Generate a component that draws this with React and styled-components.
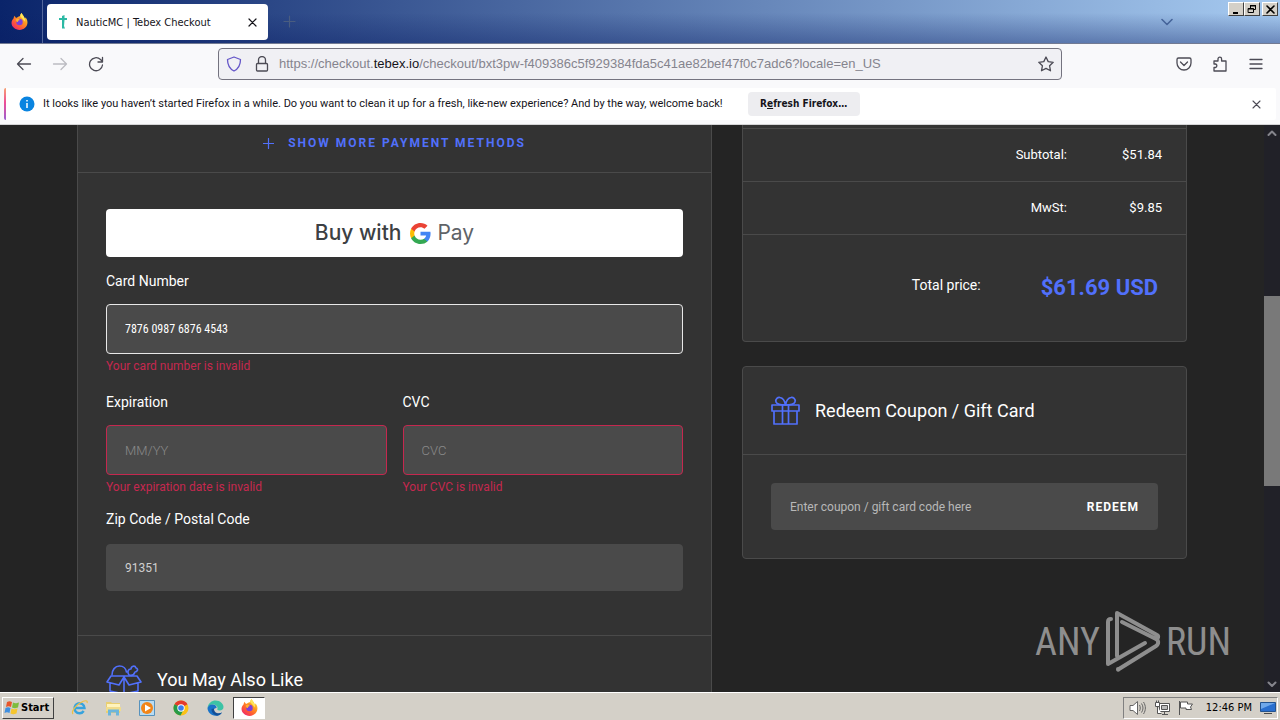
import React from "react";
import styled, { createGlobalStyle, css } from "styled-components";

const ui = `"DejaVu Sans Condensed", "Noto Sans", sans-serif`;
const web = `Roboto, "Liberation Sans", sans-serif`;
const line = "#4a4a4a";
const panel = "#333333";
const field = "#4a4a4a";
const accent = "#5170fb";
const danger = "#c5284f";

const GlobalStyle = createGlobalStyle`
  *, *::before, *::after { box-sizing: border-box; }
  body { margin: 0; background: #242424; font-family: ${web}; }
  button, input { font: inherit; color: inherit; margin: 0; padding: 0; border: 0; background: none; }
  button { cursor: pointer; }
  input { outline: none; min-width: 0; }
  svg { display: block; flex: none; }
`;

const Screen = styled.div`
  display: flex;
  flex-direction: column;
  height: 100vh;
  overflow: hidden;
`;

/* ---------- browser window ---------- */

const TitleBar = styled.header`
  display: flex;
  align-items: stretch;
  height: 44px;
  flex: none;
  background:
    linear-gradient(to bottom, rgba(0, 20, 80, 0) 30%, rgba(10, 30, 100, 0.38) 100%),
    linear-gradient(to right, #0a246a, #a6caf0);
  border-bottom: 1px solid #727a92;
`;

const ViewButton = styled.button`
  display: grid;
  place-items: center;
  width: 43px;
  padding-right: 3px;
  border-right: 1px solid #53679c;
`;

const Tab = styled.div`
  display: flex;
  align-items: center;
  gap: 7px;
  width: 221px;
  height: 36px;
  margin: 4px 0 0 4px;
  padding: 0 10px;
  border-radius: 4px;
  background: #fff;
  color: #15141a;
  font: 11px/16px ${ui};
`;

const TabTitle = styled.span`
  flex: 1;
  padding-top: 2px;
  white-space: nowrap;
`;

const IconButton = styled.button`
  display: grid;
  place-items: center;
  width: ${(p) => p.$w || 36}px;
  color: ${(p) => p.$color || "#4c4b55"};
`;

const Spacer = styled.div`
  flex: 1;
`;

const WindowButtons = styled.div`
  display: flex;
  align-items: flex-start;
  margin-left: 43px;
  padding: 2px 2px 0 0;
`;

const WindowButton = styled.button`
  display: grid;
  place-items: center;
  width: 16px;
  height: 14px;
  background: #d4d0c8;
  border: 1px solid;
  border-color: #fff #404040 #404040 #fff;
  margin-left: ${(p) => (p.$apart ? 2 : 0)}px;
`;

const Toolbar = styled.nav`
  display: flex;
  align-items: center;
  height: 44px;
  flex: none;
  padding: 0 6px 4px;
  background: #f9f9fb;
`;

const ToolGroup = styled.div`
  display: flex;
  width: 212px;
  justify-content: ${(p) => (p.$end ? "flex-end" : "flex-start")};
`;

const AddressBar = styled.div`
  display: flex;
  align-items: center;
  flex: 1;
  min-width: 0;
  height: 32px;
  padding: 0 7px;
  gap: 9px;
  border: 1px solid #74737f;
  border-radius: 4px;
  background: #f0f0f4;
`;

const SiteButtons = styled.div`
  display: flex;
  gap: 12px;
`;

const Address = styled.div`
  flex: 1;
  min-width: 0;
  overflow: hidden;
  white-space: nowrap;
  outline: none;
  font: 13px/20px "Liberation Sans", sans-serif;
  color: #85848e;
  b { font-weight: 400; color: #15141a; }
`;

const NoticeWrap = styled.div`
  flex: none;
  padding: 0 4px 4px;
  background: #f9f9fb;
  border-bottom: 1px solid #d4d4d6;
`;

const Notice = styled.div`
  display: flex;
  align-items: center;
  height: 32px;
  padding-left: 14px;
  background: linear-gradient(#f7a273, #ee4d96 45%, #9a5fd0) left / 2px 100% no-repeat, #fff;
  border-radius: 2px;
  color: #15141a;
  font: 11px/16px ${web};
`;

const NoticeText = styled.span`
  margin-left: 7px;
  white-space: nowrap;
`;

const NoticeButton = styled.button`
  width: 112px;
  height: 24px;
  margin-left: 25px;
  border-radius: 4px;
  background: #ededf0;
  font: bold 10px/16px ${ui};
`;

/* ---------- page ---------- */

const Viewport = styled.div`
  position: relative;
  display: flex;
  flex: 1;
  min-height: 0;
  overflow: hidden;
  background: #242424;
`;

const Page = styled.main`
  flex: 1;
  min-width: 0;
  display: flex;
  justify-content: center;
  align-items: flex-start;
  color: #fff;
`;

const Columns = styled.div`
  display: grid;
  grid-template-columns: minmax(0, 127fr) minmax(0, 89fr);
  gap: 30px;
  width: 100%;
  max-width: 1110px;
`;

const Payment = styled.section`
  background: ${panel};
  border: solid ${line};
  border-width: 0 1px;
`;

const ShowMore = styled.button`
  display: flex;
  justify-content: center;
  align-items: center;
  gap: 14px;
  width: 100%;
  padding: 9px 0 20px;
  border-bottom: 1px solid ${line};
  color: ${accent};
  font: 700 12px/18px ${web};
  letter-spacing: 2px;
`;

const CardForm = styled.form`
  display: flex;
  flex-direction: column;
  padding: 36px 28px 44px;
  border-bottom: 1px solid ${line};
`;

const GPayButton = styled.button`
  display: flex;
  justify-content: center;
  align-items: center;
  gap: 9px;
  height: 48px;
  border-radius: 4px;
  background: #fff;
  color: #3c4043;
  font: 500 21px/24px Inter, sans-serif;
`;

const GPayMark = styled.span`
  display: flex;
  align-items: center;
  gap: 6px;
  color: #5f6368;
  font: 400 21px/24px Inter, sans-serif;
`;

const FieldRow = styled.div`
  display: grid;
  grid-template-columns: 1fr 1fr;
  gap: 16px;
`;

const Field = styled.div`
  display: flex;
  flex-direction: column;
  gap: 13px;
  margin-top: ${(p) => (p.$loose ? 18 : 14)}px;
`;

const Label = styled.label`
  font: 14px/20px ${web};
`;

const TextInput = styled.input`
  height: 50px;
  padding: 0 18px;
  border: 1px solid ${(p) => (p.$invalid ? danger : p.$focused ? "#e8e8e8" : field)};
  border-radius: 4px;
  background: ${field};
  color: #fff;
  font: 13px/18px ${web};
  &::placeholder { color: #8a8a8a; opacity: 1; font-weight: 300; }
  ${(p) => p.$narrow && css`font: 12px/18px "Roboto Condensed", ${web};`}
  ${(p) => p.$short && css`height: 47px; margin-top: 2px; color: #d0d0d0; font-size: 12px;`}
`;

const ErrorText = styled.div`
  margin-top: -9px;
  color: ${danger};
  font: 12px/16px ${web};
`;

const SectionTitle = styled.h2`
  display: flex;
  align-items: center;
  gap: 15px;
  margin: 0;
  padding: 28px;
  font: 400 18px/31px ${web};
`;

const Side = styled.aside`
  display: flex;
  flex-direction: column;
  gap: 24px;
`;

const Card = styled.section`
  background: ${panel};
  border: 1px solid ${line};
  border-radius: 4px;
  ${(p) => p.$cut && css`border-top: 0; border-radius: 0 0 4px 4px; padding-top: 3px;`}
`;

const Totals = styled.dl`
  margin: 0;
`;

const TotalsRow = styled.div`
  display: flex;
  justify-content: flex-end;
  align-items: center;
  height: 53px;
  padding-right: 24px;
  border-top: 1px solid ${line};
  font: 13px/18px ${web};
  dt, dd { margin: 0; }
  dd { width: 95px; text-align: right; }
`;

const GrandTotal = styled(TotalsRow)`
  height: 107px;
  padding-right: 28px;
  font-size: 14px;
  dt { padding-bottom: 6px; }
  dd { width: auto; margin-left: 60px; color: ${accent}; font-weight: 700; font-size: 22px; line-height: 24px; }
`;

const CouponBody = styled.form`
  padding: 28px;
  border-top: 1px solid ${line};
`;

const CouponBox = styled.div`
  display: flex;
  align-items: center;
  height: 47px;
  padding: 0 19px;
  border-radius: 4px;
  background: ${field};
`;

const CouponInput = styled.input`
  flex: 1;
  font: 12px/18px ${web};
  color: #fff;
  &::placeholder { color: #b8b8b8; opacity: 1; }
`;

const RedeemButton = styled.button`
  font: 700 12px/18px ${web};
  letter-spacing: 1px;
`;

const ScrollTrack = styled.div`
  display: grid;
  grid-template-rows: 16px 155fr 189fr 190fr 16px;
  width: 16px;
  flex: none;
  justify-items: center;
  align-items: center;
  background: #212128;
  color: #85858c;
  svg:last-child { grid-row: 5; }
`;

const ScrollThumb = styled.div`
  grid-row: 3;
  width: 100%;
  height: 100%;
  background: #797979;
`;

const Watermark = styled.div`
  position: absolute;
  right: 49px;
  bottom: 18px;
  display: flex;
  align-items: center;
  gap: 5px;
  color: #8e8e8e;
  font: 400 38px/64px "Roboto Condensed", ${web};
  pointer-events: none;
`;

/* ---------- taskbar ---------- */

const Taskbar = styled.footer`
  display: flex;
  align-items: center;
  height: 28px;
  flex: none;
  padding: 2px 2px 0;
  background: #d4d0c8;
  border-top: 1px solid #fff;
`;

const StartButton = styled.button`
  display: flex;
  align-items: center;
  gap: 1px;
  width: 52px;
  height: 22px;
  margin-right: 8px;
  padding-left: 1px;
  background: #d4d0c8;
  border: 1px solid;
  border-color: #fff #404040 #404040 #fff;
  color: #000;
  font: bold 11px/16px ${ui};
`;

const TaskButton = styled.button`
  display: grid;
  place-items: center;
  width: ${(p) => (p.$active ? 32 : 34)}px;
  height: 22px;
  ${(p) => p.$active && css`margin-left: 1px; background: #fff; border: 1px solid; border-color: #404040 #fff #fff #404040;`}
`;

const Tray = styled.div`
  display: flex;
  align-items: center;
  gap: 8px;
  height: 22px;
  padding: 0 1px 0 5px;
  border: 1px solid;
  border-color: #808080 #fff #fff #808080;
  color: #000;
  font: 11px/16px ${ui};
`;

const Clock = styled.time`
  margin-left: 4px;
  white-space: nowrap;
`;

/* ---------- drawings ---------- */

const Stroke = ({ size = 16, w = size, h = size, sw = 1.3, children }) => (
  <svg width={w} height={h} viewBox={`0 0 ${w} ${h}`} fill="none" stroke="currentColor" strokeWidth={sw} strokeLinecap="round" strokeLinejoin="round" aria-hidden="true">
    {children}
  </svg>
);

const FirefoxLogo = () => (
  <svg width="17" height="17" viewBox="0 0 32 32" aria-hidden="true">
    <defs>
      <linearGradient id="fx" x1="0.85" y1="0.1" x2="0.2" y2="0.95">
        <stop offset="0" stopColor="#ffe044" />
        <stop offset="0.35" stopColor="#ff9a1f" />
        <stop offset="0.7" stopColor="#ff5a36" />
        <stop offset="1" stopColor="#ee2a6c" />
      </linearGradient>
    </defs>
    <path d="M20 0c-2 2-3 4-3 6-2 0-5 1-6 3-2 0-3-1-4-4-1 1-2 3-2 5-3 3-4 6-4 9 0 7 7 13 15 13s15-6 15-14c0-4-1-7-4-10 0 2 0 2-1 3-1-5-4-7-6-11z" fill="url(#fx)" />
    <circle cx="16" cy="17" r="6" fill="#7a3fdc" />
    <path d="M9 12c3-2 6-1 8 1-3 0-4 2-4 4-2 0-4-2-4-5z" fill="#ffb02e" />
    <path d="M20 0c-2 2-3 4-2 7 3 3 6 5 7 9 1-1 2-3 1-5-1-4-4-6-6-11z" fill="#ffe65a" />
  </svg>
);

const Favicon = () => (
  <svg width="12" height="14" viewBox="0 0 12 14" aria-hidden="true">
    <path d="M5 1l2.500-1v3H10v2H7.500l-.5 6 1 2.500H5L5 5H2V3h3z" fill="#2cb9a4" />
  </svg>
);

const GoogleG = () => (
  <svg width="21" height="21" viewBox="0 0 48 48" aria-hidden="true">
    <path fill="#4285f4" d="M47 24.5c0-1.600-.1-3.200-.4-4.700H24v9h12.900c-.6 3-2.200 5.500-4.800 7.200v6h7.700C44.300 37.900 47 31.800 47 24.500z" />
    <path fill="#34a853" d="M24 48c6.500 0 11.900-2.100 15.900-5.800l-7.700-6c-2.200 1.400-4.900 2.300-8.200 2.300-6.300 0-11.600-4.200-13.500-9.900h-8v6.200C6.400 42.600 14.600 48 24 48z" />
    <path fill="#fbbc04" d="M10.500 28.600c-.5-1.400-.8-3-.8-4.600s.3-3.200.8-4.600v-6.200h-8C.9 16.400 0 20.100 0 24s.9 7.600 2.500 10.800z" />
    <path fill="#ea4335" d="M24 9.500c3.500 0 6.700 1.200 9.200 3.600l6.800-6.800C35.900 2.400 30.500 0 24 0 14.600 0 6.400 5.400 2.500 13.200l8 6.200C12.400 13.700 17.700 9.500 24 9.500z" />
  </svg>
);

const GiftIcon = () => (
  <svg width="29" height="30" viewBox="0 0 29 30" fill="none" stroke={accent} strokeWidth="1.700" strokeLinejoin="round" aria-hidden="true">
    <path d="M1 9h27v6H1zM3 15h23v13H3zM11.500 9v19M17.500 9v19" />
    <path d="M14.500 9C12 9 6 9 5 6c-1-3 2-5 4-4.500C12.500 2 14 6 14.500 9zM14.500 9C17 9 23 9 24 6c1-3-2-5-4-4.500C16.500 2 15 6 14.500 9z" />
  </svg>
);

const OpenBoxIcon = () => (
  <svg width="36" height="30" viewBox="0 0 36 30" fill="none" stroke={accent} strokeWidth="1.600" strokeLinejoin="round" strokeLinecap="round" aria-hidden="true">
    <path d="M5 11h26l4 6-12 3-5-8-5 8-12-3zM4 18v8l14 3 14-3v-8M18 12v17" />
    <path d="M6 10C6 5 9 1 13.500 1c4 0 6.500 3 7 6M23 10c-2-3-1-6 2-6 0-3 4-4 5-1 3 1 1 4-1 4-1 3-3 4-6 3z" />
  </svg>
);

const PlayMark = () => (
  <svg width="56" height="64" viewBox="0 0 56 64" fill="none" stroke="currentColor" strokeWidth="4" strokeLinecap="round" strokeLinejoin="round" aria-hidden="true">
    <path d="M6 9C4 9 3 10 3 12v42l37-21" />
    <path d="M12 46V3l40 22c2 1 1 4-1 4L17 12" />
    <path d="M50 28c4 2 4 6 1 8L14 59c-1 1-1 1-1 0" />
  </svg>
);

const Chevron = ({ up }) => (
  <Stroke w={10} h={10} sw={2}><path d={up ? "M1.500 7L5 3.500 8.500 7" : "M1.500 3.500L5 7l3.500-3.500"} /></Stroke>
);

export default function App() {
  return (
    <Screen>
      <GlobalStyle />
      <TitleBar>
        <ViewButton aria-label="Firefox view"><FirefoxLogo /></ViewButton>
        <Tab>
          <Favicon />
          <TabTitle>NauticMC | Tebex Checkout</TabTitle>
          <IconButton $w={12} $color="#15141a" aria-label="Close tab"><Stroke size={9} sw={1.2}><path d="M1 1l7 7M8 1L1 8" /></Stroke></IconButton>
        </Tab>
        <IconButton $w={42} $color="#4a5d80" aria-label="New tab"><Stroke size={13} sw={1.2}><path d="M6.500 1v11M1 6.500h11" /></Stroke></IconButton>
        <Spacer />
        <IconButton $w={36} $color="#46649a" aria-label="List all tabs"><Stroke w={12} h={8} sw={1.6}><path d="M1 1.500L6 6.500l5-5" /></Stroke></IconButton>
        <WindowButtons>
          <WindowButton aria-label="Minimize"><Stroke w={10} h={9} sw={2}><path d="M2 8h5" stroke="#000" strokeLinecap="butt" /></Stroke></WindowButton>
          <WindowButton aria-label="Restore"><Stroke w={10} h={10} sw={1}><path stroke="#000" d="M3.500 4V1.500h5v4H7M3.500 1.500h5M1.500 4.500h5v4h-5zM1.500 5h5M3.500 2h5" /></Stroke></WindowButton>
          <WindowButton $apart aria-label="Close"><Stroke w={9} h={9} sw={1.6}><path stroke="#000" d="M1 1l7 7M8 1L1 8" /></Stroke></WindowButton>
        </WindowButtons>
      </TitleBar>

      <Toolbar>
        <ToolGroup>
          <IconButton aria-label="Back"><Stroke><path d="M14.500 8h-13M7 2.500L1.500 8 7 13.500" /></Stroke></IconButton>
          <IconButton $color="#bcbcc2" aria-label="Forward"><Stroke><path d="M1.500 8h13M9 2.500L14.500 8 9 13.500" /></Stroke></IconButton>
          <IconButton aria-label="Reload"><Stroke><path d="M14.500 9A6.500 6.500 0 1 1 12.500 3.500L14.500 5.500M14.500 1.500V6H10" /></Stroke></IconButton>
        </ToolGroup>
        <AddressBar>
          <SiteButtons>
            <IconButton $w={16} $color="#6455c8" aria-label="Tracking protection"><Stroke><path d="M8 1l6.500 2.500C14.500 9 12 13 8 15 4 13 1.500 9 1.500 3.500z" /></Stroke></IconButton>
            <IconButton $w={16} aria-label="Site information"><Stroke><path d="M3.500 7.500h9a1 1 0 0 1 1 1V14a1 1 0 0 1-1 1h-9a1 1 0 0 1-1-1V8.500a1 1 0 0 1 1-1zM4.500 7.500V4a3.500 3.500 0 0 1 7 0v3.500" /></Stroke></IconButton>
          </SiteButtons>
          <Address role="textbox" aria-label="Address" contentEditable suppressContentEditableWarning spellCheck={false}>
            https://checkout.<b>tebex.io</b>/checkout/bxt3pw-f409386c5f929384fda5c41ae82bef47f0c7adc6?locale=en_US
          </Address>
          <IconButton $w={16} aria-label="Bookmark"><Stroke><path d="M8 1l2.200 4.600 5 .7-3.600 3.500.9 5L8 12.400 3.500 14.800l.9-5L.8 6.300l5-.7z" /></Stroke></IconButton>
        </AddressBar>
        <ToolGroup $end>
          <IconButton aria-label="Save to Pocket"><Stroke><path d="M2.500 2h11a1.500 1.500 0 0 1 1.500 1.500V7A7 7 0 0 1 1 7V3.500A1.500 1.500 0 0 1 2.500 2zM4.500 6L8 9.500 11.500 6" /></Stroke></IconButton>
          <IconButton aria-label="Extensions"><Stroke><path d="M2 5h4V3a1.800 1.800 0 0 1 3.600 0v2H14v10H2v-3.500h1.500a1.800 1.800 0 0 0 0-3.500H2z" /></Stroke></IconButton>
          <IconButton aria-label="Menu"><Stroke w={14}><path d="M1 3.500h12M1 8h12M1 12.500h12" /></Stroke></IconButton>
        </ToolGroup>
      </Toolbar>

      <NoticeWrap>
        <Notice role="status">
          <svg width="18" height="16" viewBox="0 0 18 16" aria-hidden="true">
            <circle cx="9" cy="8" r="7.500" fill="#0a84e0" />
            <path d="M9 7v5M9 4v1.500" stroke="#fff" strokeWidth="1.500" />
          </svg>
          <NoticeText>It looks like you haven’t started Firefox in a while. Do you want to clean it up for a fresh, like-new experience? And by the way, welcome back!</NoticeText>
          <NoticeButton>R<u>e</u>fresh Firefox…</NoticeButton>
          <Spacer />
          <IconButton $w={40} aria-label="Dismiss"><Stroke size={9} sw={1.1}><path d="M1 1l7 7M8 1L1 8" /></Stroke></IconButton>
        </Notice>
      </NoticeWrap>

      <Viewport>
        <Page>
          <Columns>
            <Payment>
              <ShowMore>
                <Stroke size={11} sw={1.2}><path d="M5.500 .5v10M.5 5.500h10" /></Stroke>
                SHOW MORE PAYMENT METHODS
              </ShowMore>
              <CardForm>
                <GPayButton type="button">
                  Buy with
                  <GPayMark><GoogleG />Pay</GPayMark>
                </GPayButton>
                <Field>
                  <Label htmlFor="card">Card Number</Label>
                  <TextInput id="card" $focused $narrow defaultValue="7876 0987 6876 4543" />
                  <ErrorText>Your card number is invalid</ErrorText>
                </Field>
                <FieldRow>
                  <Field $loose>
                    <Label htmlFor="exp">Expiration</Label>
                    <TextInput id="exp" $invalid placeholder="MM/YY" />
                    <ErrorText>Your expiration date is invalid</ErrorText>
                  </Field>
                  <Field $loose>
                    <Label htmlFor="cvc">CVC</Label>
                    <TextInput id="cvc" $invalid placeholder="CVC" />
                    <ErrorText>Your CVC is invalid</ErrorText>
                  </Field>
                </FieldRow>
                <Field>
                  <Label htmlFor="zip">Zip Code / Postal Code</Label>
                  <TextInput id="zip" $short defaultValue="91351" />
                </Field>
              </CardForm>
              <SectionTitle><OpenBoxIcon />You May Also Like</SectionTitle>
            </Payment>

            <Side>
              <Card $cut>
                <Totals>
                  <TotalsRow><dt>Subtotal:</dt><dd>$51.84</dd></TotalsRow>
                  <TotalsRow><dt>MwSt:</dt><dd>$9.85</dd></TotalsRow>
                  <GrandTotal><dt>Total price:</dt><dd>$61.69 USD</dd></GrandTotal>
                </Totals>
              </Card>
              <Card>
                <SectionTitle><GiftIcon />Redeem Coupon / Gift Card</SectionTitle>
                <CouponBody>
                  <CouponBox>
                    <CouponInput aria-label="Coupon or gift card code" placeholder="Enter coupon / gift card code here" />
                    <RedeemButton type="button">REDEEM</RedeemButton>
                  </CouponBox>
                </CouponBody>
              </Card>
            </Side>
          </Columns>
        </Page>
        <ScrollTrack>
          <Chevron up />
          <ScrollThumb />
          <Chevron />
        </ScrollTrack>
        <Watermark><span>ANY</span><PlayMark /><span>RUN</span></Watermark>
      </Viewport>

      <Taskbar>
        <StartButton>
          <svg width="16" height="15" viewBox="0 0 16 15" aria-hidden="true">
            <path d="M3 2c2-1 3-1 5 0L7 7C5 6 4 6 2 7z" fill="#e8562a" />
            <path d="M9 2.500c2 1 3 1 6 0l-1 5c-3 1-4 1-6 0z" fill="#7ebc3c" />
            <path d="M1.500 8c2-1 3-1 5 0l-1 5c-2-1-3-1-5 0z" fill="#3f8fe0" />
            <path d="M7.500 8.500c2 1 3 1 6 0l-1 5c-3 1-4 1-6 0z" fill="#f6c62e" />
          </svg>
          Start
        </StartButton>
        <TaskButton aria-label="Internet Explorer">
          <svg width="17" height="17" viewBox="0 0 17 17" fill="none" aria-hidden="true">
            <path d="M4 9h9.500a5 5 0 1 0-.8 3" stroke="#37a3dd" strokeWidth="2.400" />
            <path d="M2 15c-2-2 2-8 7-11s8-3 7 0" stroke="#ecc044" strokeWidth="1.200" />
          </svg>
        </TaskButton>
        <TaskButton aria-label="Explorer">
          <svg width="17" height="16" viewBox="0 0 17 16" aria-hidden="true">
            <path d="M1 2h5l1 1h8v10H1z" fill="#e9cf72" />
            <path d="M2 4h13v4H2z" fill="#fff3bd" />
            <path d="M1 7h15v4H1z" fill="#f1dc8c" />
            <path d="M3 15.500V9.500h11v6h-3v-3H6v3z" fill="#6bb5dc" />
          </svg>
        </TaskButton>
        <TaskButton aria-label="Media Player">
          <svg width="16" height="16" viewBox="0 0 16 16" aria-hidden="true">
            <path d="M.5 .5h15v15H.5z" fill="#b9dcf3" stroke="#5792bd" />
            <circle cx="8" cy="8" r="6" fill="#f28519" />
            <path d="M6 4.500v7L12 8z" fill="#fff" />
          </svg>
        </TaskButton>
        <TaskButton aria-label="Chrome">
          <svg width="16" height="16" viewBox="0 0 16 16" aria-hidden="true">
            <circle cx="8" cy="8" r="7.500" fill="#fbc116" />
            <path d="M8 8L1.500 4.200A7.500 7.500 0 0 1 14.500 4.200z" fill="#e33b2e" />
            <path d="M1.500 4.200A7.500 7.500 0 0 0 7.500 15.500L11 9z" fill="#269a48" />
            <circle cx="8" cy="8" r="3.700" fill="#fff" />
            <circle cx="8" cy="8" r="2.800" fill="#3b7ded" />
          </svg>
        </TaskButton>
        <TaskButton aria-label="Edge">
          <svg width="17" height="16" viewBox="0 0 17 16" aria-hidden="true">
            <path d="M.5 8C1 3 5 .5 8.500 .5c5 0 8 3.500 8 6.500 0 2-1.500 3.500-4 3.500-2 0-2.500-1-2-2C11 6 8 4 5 4.500 3 5 1.500 6 .5 8z" fill="#3cc3a5" />
            <path d="M.5 8C1.500 5 4 4 6 4.500c3 .5 4 2 3.500 3.500C6 8 5.500 12 9 13.500c2 1 4 0 6-1-2 3-4.500 3.500-6.500 3.300C4 15.500 .5 12 .5 8z" fill="#1a73c8" />
            <path d="M4.500 9c0 4 3 6.500 6 6.500 2-.3 4-2 4.500-3-3 1.500-8 1-8-4z" fill="#134f97" />
          </svg>
        </TaskButton>
        <TaskButton $active aria-label="Firefox"><FirefoxLogo /></TaskButton>
        <Spacer />
        <Tray>
          <svg width="17" height="16" viewBox="0 0 17 16" fill="#fff" stroke="#666" aria-hidden="true">
            <path d="M1 5.500h3L8.500 1.500v13L4 10.500H1z" />
            <path d="M10.500 5c1 2 1 4 0 6M12.500 3.500c2 3 2 6 0 9M14.500 2c2.500 4 2.500 8 0 12" fill="none" />
          </svg>
          <svg width="16" height="16" viewBox="0 0 16 16" fill="#fff" stroke="#555" aria-hidden="true">
            <path d="M5.500 3.500h10v8h-10zM8 14.500h6M10.500 12v2" />
            <path d="M7.500 5.500h6v4h-6z" fill="#bbb" />
            <path d="M1.500 2.500h4v4h-4zM2.500 .5v2M4.500 .5v2M3.500 6.500v7h4" />
          </svg>
          <svg width="16" height="16" viewBox="0 0 16 16" fill="#fff" stroke="#555" aria-hidden="true">
            <path d="M1.500 1v14M2.500 2h7v2h5l-2 3 1 2.500H8V8H2.500z" />
          </svg>
          <Clock>12:46 PM</Clock>
          <svg width="16" height="14" viewBox="0 0 16 14" aria-hidden="true">
            <path d="M.5 1.500h15v9H.5z" fill="#2a6fce" stroke="#23538f" />
            <path d="M1 2h14L1 8z" fill="#6fa8ea" />
            <path d="M4 12.500h8" stroke="#4a4a4a" />
          </svg>
        </Tray>
      </Taskbar>
    </Screen>
  );
}
